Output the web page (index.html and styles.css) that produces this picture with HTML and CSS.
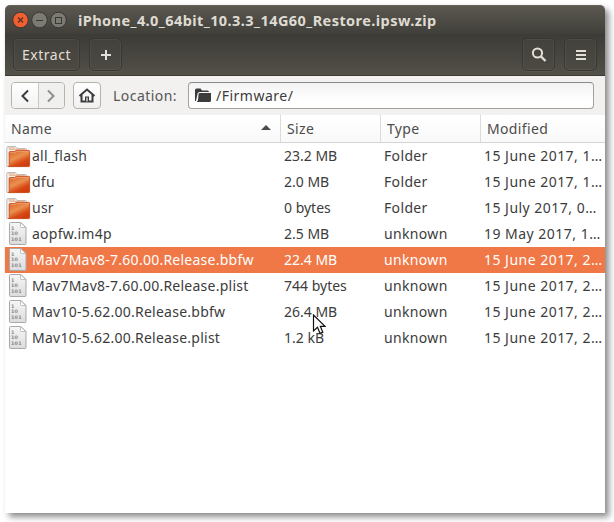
FILE: index.html
```
<!DOCTYPE html>
<html lang="en">
<head>
<meta charset="utf-8">
<title>iPhone_4.0_64bit_10.3.3_14G60_Restore.ipsw.zip</title>
<link rel="stylesheet" href="styles.css">
</head>
<body>
<svg class="defs" width="0" height="0" aria-hidden="true">
  <defs>
    <linearGradient id="folderFill" x1="0" y1="0" x2=".6" y2="1"><stop offset="0" stop-color="#dc5d22"/><stop offset=".5" stop-color="#ea9150"/><stop offset=".8" stop-color="#d84a16"/><stop offset="1" stop-color="#cf3e0e"/></linearGradient>
    <linearGradient id="pageFill" x1="0" y1="0" x2="0" y2="1"><stop offset="0" stop-color="#f6f6f6"/><stop offset="1" stop-color="#dcdcdc"/></linearGradient>
    <symbol id="folder" viewBox="0 0 26 26">
      <path d="M.8 23.500V4.500q0-1 1-1h7.700l1.500 2h8.500q1 0 1 1v17z" fill="#f2f1f0" stroke="#b8b5b2" stroke-width=".9"/>
      <path d="M2.500 4.900h6.500M3 6.300h16" stroke="#e9a27c" stroke-width=".9"/>
      <path d="M3.200 9.500q0-.9.900-.9h4.600L10.200 7.400h12.600q.8 0 .8.800v14.500q0 .9-.9.900H2.500q.7-.8.700-2z" fill="url(#folderFill)" stroke="#cb4714" stroke-width=".9"/>
      <path d="M4.200 9.600H9l1.500-1.200h12.200" fill="none" stroke="#eea17a" stroke-width=".8"/>
    </symbol>
    <symbol id="file" viewBox="0 0 20 26">
      <path d="M1.500 2.500q0-1 1-1h10.500l5 5v16q0 1-1 1H2.500q-1 0-1-1z" fill="url(#pageFill)" stroke="#a9a9a9"/>
      <path d="M12.500 1.500v4q0 1 1 1h4.200z" fill="#fff" stroke="#b0b0b0" stroke-width=".8"/>
      <g font-family="DejaVu Sans, sans-serif" font-size="4.800" font-weight="bold" fill="#858585"><text x="3" y="8.500">1</text><text x="3" y="14.300">10</text><text x="3" y="20.300">101</text></g>
    </symbol>
  </defs>
</svg>
<main class="window">
  <header class="titlebar">
    <svg class="win-buttons" width="56" height="18" viewBox="0 0 56 18">
      <circle cx="8.500" cy="9" r="7.800" fill="#ef5f32" stroke="#393833"/>
      <path d="M6 6.500l5 5m0-5l-5 5" stroke="#54311f" stroke-width="1.200"/>
      <circle cx="27.500" cy="9" r="7.800" fill="#7b7a73" stroke="#393833"/>
      <path d="M24 9.500h7" stroke="#393833"/>
      <circle cx="46.500" cy="9" r="7.800" fill="#7b7a73" stroke="#393833"/>
      <rect x="43.500" y="6.500" width="6" height="6" fill="none" stroke="#393833"/>
    </svg>
    <h1 class="title">iPhone_4.0_64bit_10.3.3_14G60_Restore.ipsw.zip</h1>
  </header>
  <div class="toolbar">
    <button class="tool extract">Extract</button>
    <button class="tool" aria-label="Add"><svg width="12" height="12"><path d="M6 1v10M1 6h10" stroke="#e4dfd6" stroke-width="2"/></svg></button>
    <span class="spacer"></span>
    <button class="tool search" aria-label="Search"><svg width="16" height="16"><circle cx="6.500" cy="6" r="4.600" fill="none" stroke="#e4dfd6" stroke-width="2"/><path d="M10 9.500l4.500 4.500" stroke="#e4dfd6" stroke-width="2.400"/></svg></button>
    <button class="tool" aria-label="Menu"><svg width="10" height="10"><path d="M0 1h10M0 5h10M0 9h10" stroke="#e4dfd6" stroke-width="2"/></svg></button>
  </div>
  <nav class="location">
    <div class="nav-pair">
      <button aria-label="Back"><svg width="10" height="14"><path d="M8 1.500L2.500 7 8 12.500" fill="none" stroke="#3c3c3c" stroke-width="2"/></svg></button>
      <button class="disabled" aria-label="Forward"><svg width="10" height="14"><path d="M2 1.500L7.500 7 2 12.500" fill="none" stroke="#8e8e8e" stroke-width="2"/></svg></button>
    </div>
    <button class="home" aria-label="Home"><svg width="18" height="16"><path d="M1.500 8L9 1.500 16.500 8M3.500 6.500V13.500h11V6.500" fill="none" stroke="#3c3c3c" stroke-width="2"/><path d="M7 14V8.500h4V14" fill="#3c3c3c"/><path d="M9 9.500v4" stroke="#f5f5f5" stroke-width="1.200"/></svg></button>
    <span class="loc-label">Location:</span>
    <div class="entry">
      <svg width="16" height="15"><path d="M0 13V2q0-1.500 1.500-1.500h4L7 2.500h5.500q1.500 0 1.500 1.500H4.500Q3 4 2.600 5.500L1 13z" fill="#3c3c3c"/><path d="M4.500 5H16v7.500q0 1.500-1.500 1.500h-13q1.200-.3 1.500-2l.5-5.500Q3.700 5 4.500 5z" fill="#3c3c3c"/></svg>
      <span>/Firmware/</span>
    </div>
  </nav>
  <div class="grid head">
    <span class="h-name">Name<svg width="10" height="5"><path d="M0 5L5 0l5 5z" fill="#4a4a4a"/></svg></span><span>Size</span><span>Type</span><span>Modified</span>
  </div>
  <div class="list">
    <div class="grid row"><span class="name"><svg class="folder"><use href="#folder"/></svg><b>all_flash</b></span><span class="size">23.2 MB</span><span class="type">Folder</span><span class="date">15 June 2017, 1…</span></div>
    <div class="grid row"><span class="name"><svg class="folder"><use href="#folder"/></svg><b>dfu</b></span><span class="size">2.0 MB</span><span class="type">Folder</span><span class="date">15 June 2017, 1…</span></div>
    <div class="grid row"><span class="name"><svg class="folder"><use href="#folder"/></svg><b>usr</b></span><span class="size">0 bytes</span><span class="type">Folder</span><span class="date">15 July 2017, 0…</span></div>
    <div class="grid row"><span class="name"><svg class="file"><use href="#file"/></svg><b>aopfw.im4p</b></span><span class="size">2.5 MB</span><span class="type">unknown</span><span class="date">19 May 2017, 1…</span></div>
    <div class="grid row selected"><span class="name"><svg class="file"><use href="#file"/></svg><b>Mav7Mav8-7.60.00.Release.bbfw</b></span><span class="size">22.4 MB</span><span class="type">unknown</span><span class="date">15 June 2017, 2…</span></div>
    <div class="grid row"><span class="name"><svg class="file"><use href="#file"/></svg><b>Mav7Mav8-7.60.00.Release.plist</b></span><span class="size">744 bytes</span><span class="type">unknown</span><span class="date">15 June 2017, 2…</span></div>
    <div class="grid row"><span class="name"><svg class="file"><use href="#file"/></svg><b>Mav10-5.62.00.Release.bbfw</b></span><span class="size">26.4 MB</span><span class="type">unknown</span><span class="date">15 June 2017, 2…</span></div>
    <div class="grid row"><span class="name"><svg class="file"><use href="#file"/></svg><b>Mav10-5.62.00.Release.plist</b></span><span class="size">1.2 kB</span><span class="type">unknown</span><span class="date">15 June 2017, 2…</span></div>
  </div>
</main>
<svg class="cursor" width="14" height="22" viewBox="0 0 14 22"><path d="M1.500 1v16l4-3.700 2.500 6 2.800-1.200L8.300 12.300H13z" fill="#fff" stroke="#111" stroke-width="1.200"/></svg>
</body>
</html>
```

FILE: styles.css
```
* { box-sizing: border-box; }
body { margin: 0; padding: 5px; height: 522px; overflow: hidden; background: #fff; font: 14px/20px "Noto Sans", sans-serif; color: #3c3c3c; }
svg { display: block; flex: none; }
.defs { position: absolute; }
button { font: inherit; margin: 0; padding: 0; display: flex; align-items: center; justify-content: center; }
.window { width: 600px; height: 508px; background: #fff; border-radius: 5px 5px 0 0; box-shadow: 4px 4px 6px rgba(0,0,0,.45), 0 0 1px rgba(0,0,0,.12); display: flex; flex-direction: column; }
.titlebar { height: 29px; display: flex; align-items: center; padding-left: 7px; border-radius: 5px 5px 0 0; background: linear-gradient(#5b5850, #403f3a); border-top: 1px solid #66635a; }
.title { margin: 0 0 0 10px; font-size: 14.5px; line-height: 20px; font-weight: 700; color: #dfdbd2; white-space: nowrap; letter-spacing: .43px; }
.toolbar { height: 42px; padding: 4px 8px; display: flex; background: linear-gradient(#3c3b37, #535048); border-bottom: 1px solid #3d3936; }
.tool { width: 33px; height: 33px; margin-left: 9px; border: 1px solid #383732; border-radius: 5px; background: linear-gradient(#42413c, #4c4a43); box-shadow: inset 0 0 0 1px rgba(255,255,255,.05), 0 1px rgba(255,255,255,.05); color: #e4dfd6; }
.tool.extract { width: 67px; margin-left: 0; letter-spacing: .55px; }
.spacer { flex: 1; }
.location { height: 39px; padding: 0 11px 0 6px; display: flex; align-items: center; background: #f2f1f0; }
.nav-pair { display: flex; width: 54px; height: 27px; border: 1px solid #b5b3b0; border-radius: 4px; overflow: hidden; }
.nav-pair button { flex: 1; border: 0; background: linear-gradient(#fff, #f2f2f2); }
.nav-pair .disabled { border-left: 1px solid #c9c8c6; background: #f0f0ef; }
.home { width: 28px; height: 27px; margin-left: 8px; border: 1px solid #b5b3b0; border-radius: 4px; background: linear-gradient(#fff, #f0f0f0); }
.loc-label { width: 75px; margin-left: 12px; color: #555; letter-spacing: .45px; }
.entry { flex: 1; height: 27px; padding-left: 6px; display: flex; align-items: center; gap: 5px; border: 1px solid #a3a19e; border-top-color: #8b8987; border-radius: 4px; background: linear-gradient(#f3f3f3, #fff 70%); letter-spacing: .5px; }
.grid { display: grid; grid-template-columns: 276px 100px 100px 124px; }
.head { height: 28px; background: linear-gradient(#fff, #f9f9f9); border-bottom: 1px solid #d5d4d2; color: #4c4c4c; letter-spacing: .35px; }
.head span { padding: 4px 0 0 6px; border-right: 1px solid #dcdbd9; }
.head span:last-child { border-right: 0; }
.head .h-name { display: flex; justify-content: space-between; padding-right: 9px; }
.h-name svg { margin-top: 6px; }
.row { height: 26px; align-items: center; white-space: nowrap; }
.row > span { padding-left: 3px; }
.row .name { display: flex; align-items: center; padding-left: 1px; letter-spacing: .25px; }
.row .type { letter-spacing: .35px; }
.row .date { letter-spacing: .48px; }
.name b { font-weight: 400; }
.folder { width: 26px; height: 26px; }
.file { width: 20px; height: 26px; margin: 0 4px 0 2px; }
.selected { background: #f07746; color: #fff; }
.cursor { position: absolute; left: 312px; top: 314px; }
```
